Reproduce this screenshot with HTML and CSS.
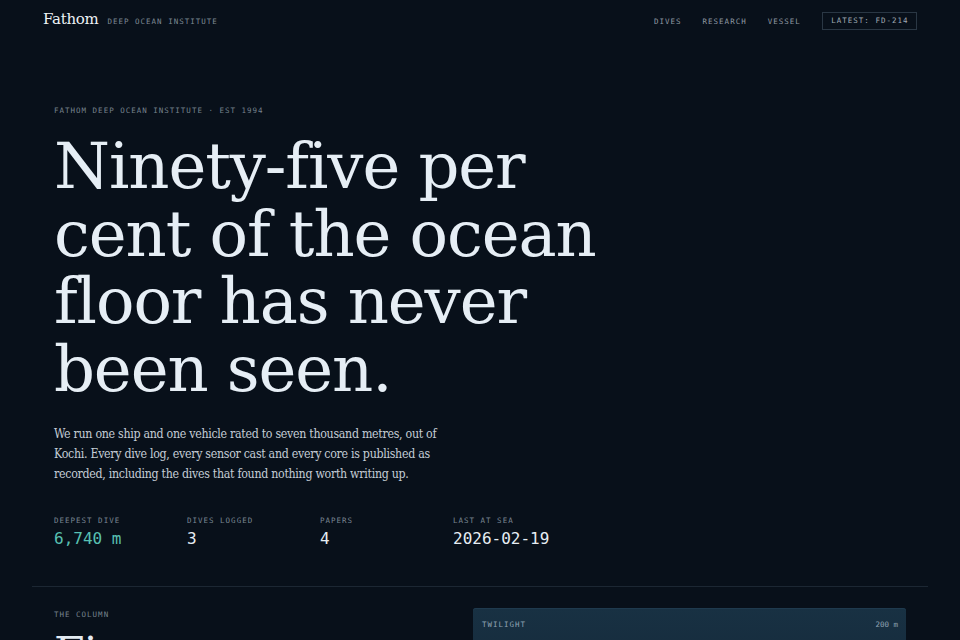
FILE: index.html
```html
<!doctype html>
<html lang="en">
<head>
<meta charset="utf-8">
<meta name="viewport" content="width=device-width, initial-scale=1">
<title>Fathom — Deep Ocean Institute</title>
<link rel="stylesheet" href="styles.css">
</head>
<body>

<header class="top">
  <div class="brand">
    <span class="logo">Fathom</span>
    <span class="tag">Deep Ocean Institute</span>
  </div>
  <nav class="nav">
    <a href="#dives">Dives</a>
    <a href="#research">Research</a>
    <a href="#vessel">Vessel</a>
    <a class="latest" href="#fd-214">Latest: FD-214</a>
  </nav>
</header>

<main>
<section class="hero">
  <p class="eyebrow">Fathom Deep Ocean Institute · Est 1994</p>
  <h1>Ninety-five per cent of the ocean floor has never been seen.</h1>
  <p class="lede">We run one ship and one vehicle rated to seven thousand metres, out of Kochi. Every dive log, every sensor cast and every core is published as recorded, including the dives that found nothing worth writing up.</p>

  <dl class="stats">
    <div><dt>Deepest dive</dt><dd class="accent">6,740 m</dd></div>
    <div><dt>Dives logged</dt><dd>3</dd></div>
    <div><dt>Papers</dt><dd>4</dd></div>
    <div><dt>Last at sea</dt><dd>2026-02-19</dd></div>
  </dl>
</section>

<section class="column">
  <div class="col-text">
    <p class="eyebrow">The column</p>
    <h2>Five zones, one descent</h2>
  </div>
  <div class="zones">
    <div class="zone twilight"><span>Twilight</span><span class="depth">200 m</span></div>
  </div>
</section>
</main>

</body>
</html>
```

FILE: styles.css
```css
body { margin:0; background:#08101a; color:#e3ebf2; font-family:"DejaVu Serif", serif; overflow:hidden }
a { color:inherit; text-decoration:none }

.top { display:flex; justify-content:space-between; align-items:center; padding:12px 43px 10px 43px; height:18px }
.brand { display:flex; align-items:baseline; gap:9px; margin-top:-5px }
.logo { font-family:"DejaVu Serif", serif; font-size:15px; color:#eef3f7; letter-spacing:-.3px }
.tag, .nav a, .eyebrow, dt { font-family:"DejaVu Sans Mono", monospace; text-transform:uppercase; letter-spacing:1px }
.tag { font-size:7.5px; color:#7d8994 }
.nav { display:flex; align-items:center; gap:21px; font-size:7.5px; margin-right:0 }
.nav a { color:#8f99a3 }
.nav a:first-child { margin-left:-2px }
.nav .latest { border:1px solid #2a3744; padding:0 7.5px 0 8.5px; height:16px; line-height:16px; color:#a0aab3 }

.hero { padding:66px 54px 0 54px }
.eyebrow { font-size:7.5px; line-height:9px; color:#76828d; margin:0 }
h1 { font-weight:normal; font-size:64px; line-height:67.6px; letter-spacing:-1.1px; margin:18px 0 0; max-width:600px; color:#e6eef5 }
.lede { font-family:"DejaVu Serif Condensed", "DejaVu Serif", serif; font-stretch:condensed; font-size:12.3px; line-height:20px; letter-spacing:-.3px; color:#c3ccd5; max-width:390px; margin:21px 0 0 }

.stats { display:grid; grid-template-columns:repeat(4, 133px); margin:32px 0 0; padding-bottom:38px }
dt { font-size:7.5px; line-height:9px; color:#7a8692 }
dd { margin:4px 0 0; font-family:"DejaVu Sans Mono", monospace; font-size:16px; line-height:19px; color:#e6edf3 }
dd.accent { color:#58c0b2 }

.column { margin:0 32px; border-top:1px solid #1c2733; padding:21px 22px 0; display:grid; grid-template-columns:1fr 433px; gap:20px }
.col-text .eyebrow { margin-top:1.5px }
h2 { font-weight:normal; font-size:44px; line-height:44px; letter-spacing:-.8px; margin:13px 0 0 }
.zone { display:flex; justify-content:space-between; font-family:"DejaVu Sans Mono", monospace; text-transform:uppercase; font-size:7.5px; letter-spacing:1px; color:#8fa3b3; padding:12px 8px 60px 9px; border-radius:3px 3px 0 0 }
.zone .depth { text-transform:none; letter-spacing:0 }
.twilight { background:linear-gradient(#183143, #15293a); box-shadow:inset 0 1px 0 #1f3a4e }
```
